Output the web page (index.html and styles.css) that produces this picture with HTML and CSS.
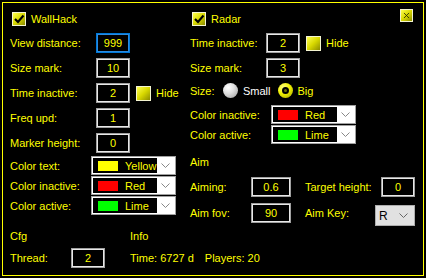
FILE: index.html
```html
<!DOCTYPE html>
<html>
<head>
<meta charset="utf-8">
<link rel="stylesheet" href="styles.css">
</head>
<body>
<div class="panel">
  <button class="close" type="button"><svg width="13" height="13" viewBox="0 0 13 13"><path d="M3.5 3.5 L9.5 9.5 M9.5 3.5 L3.5 9.5" stroke="#2a2a00" stroke-width="1" fill="none"/></svg></button>
  <div class="top">
    <div class="col col-left">
      <div class="check-row">
        <span class="cb"><svg width="12" height="12" viewBox="0 0 12 12"><path d="M2 6 L5 9 L10.5 2.5" stroke="#000" stroke-width="2.2" fill="none"/></svg></span>
        <span class="cb-text">WallHack</span>
      </div>
      <div class="row first"><span class="lbl w86">View distance:</span><span class="inp focus">999</span></div>
      <div class="row"><span class="lbl w86">Size mark:</span><span class="inp">10</span></div>
      <div class="row"><span class="lbl w86">Time inactive:</span><span class="inp">2</span><span class="cb cb-hide"></span><span class="hide-text">Hide</span></div>
      <div class="row"><span class="lbl w86">Freq upd:</span><span class="inp">1</span></div>
      <div class="row"><span class="lbl w86">Marker height:</span><span class="inp">0</span></div>
      <div class="dd-row first-dd"><span class="lbl w81">Color text:</span>
        <span class="dd"><span class="dd-sel"><span class="swatch yellow"></span><span class="dd-text">Yellow</span></span><span class="dd-btn"><svg width="9" height="5" viewBox="0 0 9 5"><path d="M0.5 0.5 L4.5 4.5 L8.5 0.5" stroke="#888" fill="none"/></svg></span></span>
      </div>
      <div class="dd-row"><span class="lbl w81">Color inactive:</span>
        <span class="dd"><span class="dd-sel"><span class="swatch red"></span><span class="dd-text">Red</span></span><span class="dd-btn"><svg width="9" height="5" viewBox="0 0 9 5"><path d="M0.5 0.5 L4.5 4.5 L8.5 0.5" stroke="#888" fill="none"/></svg></span></span>
      </div>
      <div class="dd-row"><span class="lbl w81">Color active:</span>
        <span class="dd"><span class="dd-sel"><span class="swatch lime"></span><span class="dd-text">Lime</span></span><span class="dd-btn"><svg width="9" height="5" viewBox="0 0 9 5"><path d="M0.5 0.5 L4.5 4.5 L8.5 0.5" stroke="#888" fill="none"/></svg></span></span>
      </div>
    </div>
    <div class="col col-right">
      <div class="check-row">
        <span class="cb"><svg width="12" height="12" viewBox="0 0 12 12"><path d="M2 6 L5 9 L10.5 2.5" stroke="#000" stroke-width="2.2" fill="none"/></svg></span>
        <span class="cb-text">Radar</span>
      </div>
      <div class="row first"><span class="lbl w76">Time inactive:</span><span class="inp">2</span><span class="cb cb-hide"></span><span class="hide-text">Hide</span></div>
      <div class="row"><span class="lbl w76">Size mark:</span><span class="inp">3</span></div>
      <div class="radio-row"><span class="lbl w33">Size:</span>
        <span class="radio off"></span><span class="radio-text white">Small</span>
        <span class="radio on"><span class="dot"></span></span><span class="radio-text">Big</span>
      </div>
      <div class="dd-row first-dd-r"><span class="lbl w81">Color inactive:</span>
        <span class="dd"><span class="dd-sel"><span class="swatch red"></span><span class="dd-text">Red</span></span><span class="dd-btn"><svg width="9" height="5" viewBox="0 0 9 5"><path d="M0.5 0.5 L4.5 4.5 L8.5 0.5" stroke="#888" fill="none"/></svg></span></span>
      </div>
      <div class="dd-row"><span class="lbl w81">Color active:</span>
        <span class="dd"><span class="dd-sel"><span class="swatch lime"></span><span class="dd-text">Lime</span></span><span class="dd-btn"><svg width="9" height="5" viewBox="0 0 9 5"><path d="M0.5 0.5 L4.5 4.5 L8.5 0.5" stroke="#888" fill="none"/></svg></span></span>
      </div>
      <div class="section">Aim</div>
      <div class="row aim-row"><span class="lbl w61">Aiming:</span><span class="inp wide">0.6</span><span class="lbl w76 ml14">Target height:</span><span class="inp">0</span></div>
      <div class="row aim-row2"><span class="lbl w61">Aim fov:</span><span class="inp wide">90</span><span class="lbl w70 ml14">Aim Key:</span>
        <span class="combo"><span class="combo-text">R</span><svg width="9" height="5" viewBox="0 0 9 5"><path d="M0.5 0.5 L4.5 4.5 L8.5 0.5" stroke="#666" fill="none"/></svg></span>
      </div>
    </div>
  </div>
  <div class="bottom">
    <div class="group cfg">
      <div class="section-b">Cfg</div>
      <div class="row brow"><span class="lbl w61">Thread:</span><span class="inp">2</span></div>
    </div>
    <div class="group info">
      <div class="section-b">Info</div>
      <div class="row brow"><span>Time: 6727 d</span><span class="players">Players: 20</span></div>
    </div>
  </div>
</div>
</body>
</html>
```

FILE: styles.css
```css
* { box-sizing: border-box; }
html, body { margin: 0; padding: 0; background: #000; }
body {
  width: 426px;
  height: 278px;
  overflow: hidden;
  font-family: "Liberation Sans", Arial, sans-serif;
  font-size: 11px;
  color: #ffff00;
}
.panel {
  position: relative;
  margin: 2px 0 0 2px;
  width: 422px;
  height: 274px;
  border: 1px solid #ffff00;
  padding: 9px 7px 0 7px;
}
.close {
  position: absolute;
  top: 6px;
  right: 10px;
  width: 13px;
  height: 13px;
  padding: 0;
  border: 1px solid #f4f4d0;
  background: linear-gradient(135deg, #ffff50 0%, #d8d800 50%, #8c8c00 100%);
  display: flex;
  align-items: center;
  justify-content: center;
}
.close svg { display: block; }
.top { display: flex; height: 217px; }
.col-left { width: 180px; }
.col-right { flex: 1; }
.check-row {
  display: flex;
  align-items: center;
  height: 14px;
  margin-left: 2px;
}
.cb {
  width: 14px;
  height: 14px;
  border: 1px solid #f4f4d0;
  background: linear-gradient(135deg, #ffff50 0%, #d8d800 50%, #8c8c00 100%);
  display: flex;
  align-items: center;
  justify-content: center;
  flex: none;
}
.cb svg { display: block; }
.cb-text { margin-left: 5px; }
.cb-hide { width: 15px; height: 15px; margin-left: 6px; }
.hide-text { margin-left: 5px; }
.row {
  display: flex;
  align-items: center;
  height: 20px;
  margin-top: 5px;
}
.row.first { margin-top: 7px; }
.lbl { flex: none; white-space: nowrap; }
.w86 { width: 86px; }
.w81 { width: 81px; }
.w76 { width: 76px; }
.w70 { width: 70px; }
.w61 { width: 61px; }
.w33 { width: 33px; }
.ml14 { margin-left: 14px; }
.inp {
  flex: none;
  width: 34px;
  height: 20px;
  border: 1px solid #a0a0a0;
  box-shadow: inset 0 0 0 1px #e8e8e8;
  display: flex;
  align-items: center;
  justify-content: center;
}
.inp.wide { width: 40px; }
.inp.focus { border-color: #0078d7; box-shadow: inset 0 0 0 1px #2a8ae0; }
.dd-row {
  display: flex;
  align-items: center;
  height: 19px;
  margin-top: 1px;
}
.dd-row.first-dd { margin-top: 3px; }
.dd-row.first-dd-r { margin-top: 7px; }
.dd {
  flex: none;
  width: 85px;
  height: 19px;
  border: 1px solid #a0a0a0;
  background: #fff;
  padding: 1px;
  display: flex;
}
.dd-sel {
  width: 64px;
  background: #000;
  display: flex;
  align-items: center;
}
.swatch { width: 20px; height: 10px; margin-left: 5px; flex: none; }
.swatch.yellow { background: #ffff00; }
.swatch.red { background: #ff0000; }
.swatch.lime { background: #00ff00; }
.dd-text { margin-left: 7px; white-space: nowrap; }
.dd-btn {
  flex: 1;
  display: flex;
  align-items: center;
  justify-content: center;
}
.dd-btn svg { display: block; }
.radio-row {
  display: flex;
  align-items: center;
  height: 15px;
  margin-top: 5px;
}
.radio {
  width: 15px;
  height: 15px;
  border-radius: 50%;
  flex: none;
  display: flex;
  align-items: center;
  justify-content: center;
}
.radio.off { background: radial-gradient(circle at 35% 30%, #ffffff 0%, #e0e0e0 40%, #9a9a9a 100%); }
.radio.on {
  margin-left: 7px;
  background: radial-gradient(circle at 35% 30%, #ffff80 0%, #f0f000 45%, #a0a000 100%);
}
.radio .dot {
  width: 7px;
  height: 7px;
  border-radius: 50%;
  background: #6a6a00;
  border: 2px solid #000;
}
.radio-text { margin-left: 5px; }
.white { color: #fff; }
.section { height: 14px; line-height: 14px; margin-top: 11px; }
.row.aim-row { margin-top: 8px; }
.row.aim-row2 { margin-top: 6px; }
.combo {
  flex: none;
  align-self: flex-start;
  margin-top: 2px;
  width: 40px;
  height: 21px;
  background: #e1e1e1;
  border: 1px solid #adadad;
  color: #000;
  font-size: 12px;
  display: flex;
  align-items: center;
  justify-content: space-between;
  padding: 0 6px 0 3px;
}
.combo svg { display: block; }
.bottom { display: flex; }
.group.cfg { width: 120px; }
.section-b { height: 14px; line-height: 14px; }
.row.brow { margin-top: 5px; }
.players { margin-left: 11px; }
```
